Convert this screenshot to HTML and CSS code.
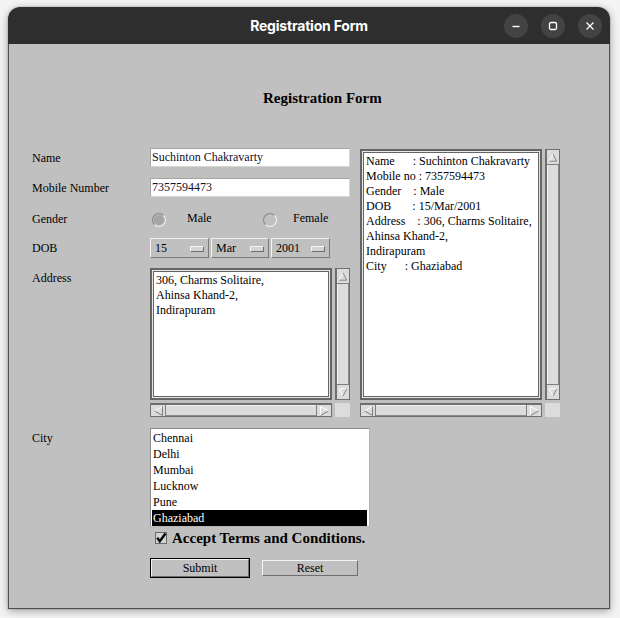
FILE: index.html
```html
<!DOCTYPE html>
<html lang="en">
<head>
<meta charset="utf-8">
<title>Registration Form</title>
<link rel="stylesheet" href="styles.css">
</head>
<body>
<div class="window">
  <div class="titlebar">
    <span class="title">Registration Form</span>
    <div class="wbtns">
      <span class="wbtn"><svg width="24" height="24" viewBox="0 0 24 24"><path d="M8.5 12.5h7" stroke="#fff" stroke-width="1.4" fill="none"/></svg></span>
      <span class="wbtn"><svg width="24" height="24" viewBox="0 0 24 24"><rect x="8.5" y="8.5" width="7" height="7" rx="1.5" stroke="#fff" stroke-width="1.3" fill="none"/></svg></span>
      <span class="wbtn"><svg width="24" height="24" viewBox="0 0 24 24"><path d="M8.5 8.5l7 7M15.5 8.5l-7 7" stroke="#fff" stroke-width="1.3" fill="none"/></svg></span>
    </div>
  </div>
  <div class="content">
    <h1 class="heading">Registration Form</h1>
    <div class="main">
      <div class="left">
        <div class="row r-name">
          <span class="lbl">Name</span>
          <div class="field">Suchinton Chakravarty</div>
        </div>
        <div class="row r-mobile">
          <span class="lbl">Mobile Number</span>
          <div class="field">7357594473</div>
        </div>
        <div class="row r-gender">
          <span class="lbl">Gender</span>
          <div class="radios">
            <span class="radio radio-on"></span><span class="rlbl rlbl-male">Male</span>
            <span class="radio radio-off"></span><span class="rlbl rlbl-female">Female</span>
          </div>
        </div>
        <div class="row r-dob">
          <span class="lbl">DOB</span>
          <div class="choices">
            <div class="choice c-day"><span>15</span><i class="ind"></i></div>
            <div class="choice c-mon"><span>Mar</span><i class="ind"></i></div>
            <div class="choice c-year"><span>2001</span><i class="ind"></i></div>
          </div>
        </div>
        <div class="row r-addr">
          <span class="lbl lbl-top">Address</span>
          <div class="tabox tabox-addr">
            <div class="ta">306, Charms Solitaire,
Ahinsa Khand-2,
Indirapuram</div>
            <div class="vscroll">
              <div class="arr arr-up"><svg width="13" height="13" viewBox="0 0 13 13"><path d="M2.5 10.5L6.5 2.5" stroke="#fff" fill="none"/><path d="M6.5 2.5L10.5 10.5H2.5" stroke="#7e7e7e" fill="none"/></svg></div>
              <div class="vthumb"></div>
              <div class="arr arr-down"><svg width="13" height="13" viewBox="0 0 13 13"><path d="M10.5 2.5H2.5L6.5 10.5" stroke="#fff" fill="none"/><path d="M6.5 10.5L10.5 2.5" stroke="#7e7e7e" fill="none"/></svg></div>
            </div>
            <div class="hscroll">
              <div class="harr harr-left"><svg width="13" height="12" viewBox="0 0 13 12"><path d="M10.5 1.5L2.5 6" stroke="#fff" fill="none"/><path d="M2.5 6L10.5 10.5V1.5" stroke="#7e7e7e" fill="none"/></svg></div>
              <div class="hthumb"></div>
              <div class="harr harr-right"><svg width="13" height="12" viewBox="0 0 13 12"><path d="M2.5 10.5V1.5L10.5 6" stroke="#fff" fill="none"/><path d="M10.5 6L2.5 10.5" stroke="#7e7e7e" fill="none"/></svg></div>
            </div>
            <div class="corner"></div>
          </div>
        </div>
      </div>
      <div class="right">
        <div class="tabox tabox-out">
          <div class="ta">Name      : Suchinton Chakravarty
Mobile no : 7357594473
Gender    : Male
DOB       : 15/Mar/2001
Address    : 306, Charms Solitaire,
Ahinsa Khand-2,
Indirapuram
City      : Ghaziabad</div>
          <div class="vscroll">
            <div class="arr arr-up"><svg width="13" height="13" viewBox="0 0 13 13"><path d="M2.5 10.5L6.5 2.5" stroke="#fff" fill="none"/><path d="M6.5 2.5L10.5 10.5H2.5" stroke="#7e7e7e" fill="none"/></svg></div>
            <div class="vthumb"></div>
            <div class="arr arr-down"><svg width="13" height="13" viewBox="0 0 13 13"><path d="M10.5 2.5H2.5L6.5 10.5" stroke="#fff" fill="none"/><path d="M6.5 10.5L10.5 2.5" stroke="#7e7e7e" fill="none"/></svg></div>
          </div>
          <div class="hscroll">
            <div class="harr harr-left"><svg width="13" height="12" viewBox="0 0 13 12"><path d="M10.5 1.5L2.5 6" stroke="#fff" fill="none"/><path d="M2.5 6L10.5 10.5V1.5" stroke="#7e7e7e" fill="none"/></svg></div>
            <div class="hthumb"></div>
            <div class="harr harr-right"><svg width="13" height="12" viewBox="0 0 13 12"><path d="M2.5 10.5V1.5L10.5 6" stroke="#fff" fill="none"/><path d="M10.5 6L2.5 10.5" stroke="#7e7e7e" fill="none"/></svg></div>
          </div>
          <div class="corner"></div>
        </div>
      </div>
    </div>
    <div class="row r-city">
      <span class="lbl lbl-top">City</span>
      <ul class="list">
        <li>Chennai</li>
        <li>Delhi</li>
        <li>Mumbai</li>
        <li>Lucknow</li>
        <li>Pune</li>
        <li class="sel">Ghaziabad</li>
      </ul>
    </div>
    <div class="terms">
      <svg class="check" width="12" height="12" viewBox="0 0 12 12"><rect x="0.5" y="0.5" width="11" height="11" fill="#d4d4d4" stroke="#6a6a6a"/><path d="M2.2 5.8L4.8 9.2L10.5 1.5" stroke="#000" stroke-width="2.4" fill="none"/></svg>
      <span class="terms-text">Accept Terms and Conditions.</span>
    </div>
    <div class="buttons">
      <button class="btn btn-focus" type="button"><span class="btn-in">Submit</span></button>
      <button class="btn btn-plain" type="button"><span class="btn-in">Reset</span></button>
    </div>
  </div>
</div>
</body>
</html>
```
FILE: styles.css
```css
* { box-sizing: border-box; }

body {
  margin: 0;
  width: 620px;
  height: 618px;
  overflow: hidden;
  background: #f4f4f4;
  font-family: "Liberation Serif", "Times New Roman", serif;
}

.window {
  margin: 7px 0 0 8px;
  width: 602px;
  border-radius: 12px 12px 0 0;
  box-shadow: 0 2px 9px rgba(0, 0, 0, 0.35), 0 0 0 1px rgba(0, 0, 0, 0.08);
}

.titlebar {
  height: 37px;
  background: #2e2e2e;
  border-radius: 12px 12px 0 0;
  display: grid;
  grid-template-columns: 1fr auto 1fr;
  align-items: center;
}

.title {
  grid-column: 2;
  color: #ffffff;
  font: 700 14px "Inter", "DejaVu Sans", sans-serif;
  letter-spacing: -0.2px;
}

.wbtns {
  grid-column: 3;
  justify-self: end;
  display: flex;
  gap: 13px;
  padding-right: 8px;
}

.wbtn {
  width: 24px;
  height: 24px;
  border-radius: 50%;
  background: #434343;
  display: flex;
}

.content {
  height: 565px;
  background: #c0c0c0;
  border: 1px solid #4f4f4f;
  border-top: 0;
  padding: 46px 0 0 23px;
  font-size: 12px;
  color: #000;
}

.heading {
  margin: 0;
  padding-left: 231px;
  font: bold 15px/17px "Liberation Serif", "Times New Roman", serif;
}

.main {
  display: flex;
  gap: 10px;
  margin-top: 41px;
}

.left { width: 318px; }

.row {
  display: flex;
  align-items: center;
}

.lbl {
  width: 118px;
  flex: none;
  line-height: 16px;
}

.lbl-top {
  align-self: flex-start;
  padding-top: 2px;
}

.r-name { height: 19px; }
.r-mobile { height: 19px; margin-top: 11px; }
.r-gender { height: 21px; margin-top: 11px; }
.r-dob { height: 19px; margin-top: 9px; }
.r-addr { height: 149px; margin-top: 11px; align-items: flex-start; }

.field {
  width: 200px;
  height: 19px;
  background: #fff;
  border: 1px solid;
  border-color: #a4a4a4 #d6d6d6 #d6d6d6 #a4a4a4;
  line-height: 17px;
  padding-left: 1px;
  white-space: nowrap;
  overflow: hidden;
  color: #10102a;
}

/* radios */
.radios {
  display: flex;
  align-items: center;
  padding-left: 2px;
}

.radio {
  width: 14px;
  height: 14px;
  border-radius: 50%;
  border: 1px solid;
  border-color: #8a8a8a #f4f4f4 #f4f4f4 #8a8a8a;
  flex: none;
  margin-top: 2px;
}

.radio-on {
  background: #a6a6a6;
  box-shadow: inset 0 0 0 1px #bdbdbd;
}

.radio-off {
  background: #c0c0c0;
}

.rlbl { margin-bottom: 1px; }
.rlbl-male { margin-left: 21px; width: 76px; }
.rlbl-female { margin-left: 16px; }

/* choices */
.choices {
  display: flex;
  gap: 2px;
}

.choice {
  height: 20px;
  border: 1px solid;
  border-color: #f2f2f2 #7a7a7a #7a7a7a #f2f2f2;
  background: #c0c0c0;
  display: flex;
  align-items: center;
  justify-content: space-between;
  padding: 0 4px 0 4px;
  line-height: 16px;
}

.c-day { width: 59px; }
.c-mon { width: 58px; }
.c-year { width: 59px; }

.ind {
  width: 14px;
  height: 6px;
  border: 1px solid;
  border-color: #f6f6f6 #6e6e6e #6e6e6e #f6f6f6;
  background: #d4d4d4;
  margin-top: 2px;
}

/* text areas */
.tabox {
  display: grid;
  column-gap: 3px;
  row-gap: 3px;
  grid-template-columns: 182px 15px;
}

.tabox-addr { grid-template-rows: 132px 14px; }
.tabox-out { grid-template-rows: 251px 14px; margin-top: 1px; }

.ta {
  background: #fff;
  border: 2px solid #656565;
  box-shadow: inset 0 0 0 1px #e6e6e6, inset 0 0 0 2px #656565;
  padding: 3px 0 0 4px;
  white-space: pre;
  overflow: hidden;
  line-height: 15px;
  font-size: 12px;
}

.vscroll {
  display: flex;
  flex-direction: column;
  background: #dcdcdc;
  border: 1px solid #6f6f6f;
  border-left-width: 2px;
}

.arr {
  height: 15px;
  flex: none;
  display: flex;
  align-items: center;
  justify-content: center;
}

.arr-up { border-bottom: 1px solid #7e7e7e; }
.arr-down { border-top: 1px solid #7e7e7e; }

.vthumb {
  flex: 1;
  border-left: 1px solid #f2f2f2;
  border-right: 1px solid #8a8a8a;
}

.hscroll {
  display: flex;
  background: #dcdcdc;
  border: 1px solid #6f6f6f;
  border-top-width: 2px;
}

.harr {
  width: 15px;
  flex: none;
  display: flex;
  align-items: center;
  justify-content: center;
}

.harr-left { border-right: 1px solid #7e7e7e; }
.harr-right { border-left: 1px solid #7e7e7e; }

.hthumb {
  flex: 1;
  border-top: 1px solid #f2f2f2;
  border-bottom: 1px solid #8a8a8a;
}

.corner { background: #dcdcdc; }

/* city list */
.r-city {
  margin-top: 11px;
  align-items: flex-start;
}

.list {
  list-style: none;
  margin: 0;
  width: 220px;
  background: #fff;
  border: 1px solid;
  border-color: #8c8c8c #b4b4b4 #b4b4b4 #8c8c8c;
  padding: 1px 2px 0 1px;
}

.list li {
  height: 16px;
  line-height: 16px;
  padding-left: 1px;
}

.list .sel {
  background: #000;
  color: #fff;
}

/* terms */
.terms {
  display: flex;
  align-items: center;
  height: 14px;
  margin-top: 4px;
  padding-left: 123px;
  gap: 5px;
}

.check { flex: none; }

.terms-text {
  font: bold 15px/14px "Liberation Serif", "Times New Roman", serif;
}

/* buttons */
.buttons {
  display: flex;
  align-items: center;
  gap: 12px;
  margin-top: 13px;
  padding-left: 118px;
}

.btn {
  margin: 0;
  padding: 0;
  background: #c0c0c0;
  font: 12px "Liberation Serif", "Times New Roman", serif;
  color: #000;
  display: flex;
}

.btn-focus {
  width: 100px;
  height: 20px;
  border: 1px solid #000;
}

.btn-plain {
  width: 96px;
  height: 16px;
  border: 0;
}

.btn-in {
  flex: 1;
  border: 1px solid;
  border-color: #f4f4f4 #6e6e6e #6e6e6e #f4f4f4;
  display: flex;
  align-items: center;
  justify-content: center;
  line-height: 14px;
}
```
